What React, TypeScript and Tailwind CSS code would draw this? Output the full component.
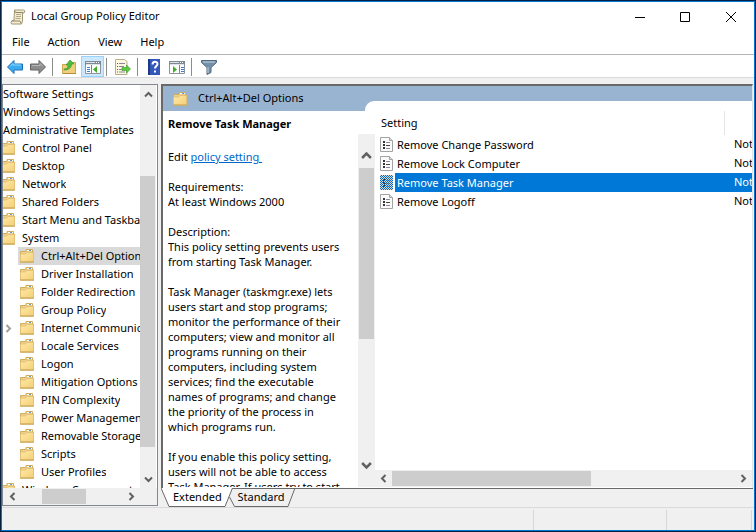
import React from "react";

type IconProps = { className?: string }

const treeRoots = ["Software Settings", "Windows Settings", "Administrative Templates"]
const treeFolders = ["Control Panel", "Desktop", "Network", "Shared Folders", "Start Menu and Taskbar", "System"]
const systemFolders = [
    "Ctrl+Alt+Del Options",
    "Driver Installation",
    "Folder Redirection",
    "Group Policy",
    "Internet Communication",
    "Locale Services",
    "Logon",
    "Mitigation Options",
    "PIN Complexity",
    "Power Management",
    "Removable Storage",
    "Scripts",
    "User Profiles",
]
const settings = ["Remove Change Password", "Remove Lock Computer", "Remove Task Manager", "Remove Logoff"]

const FolderIcon = ({ className = "" }: IconProps) => (
    <svg className={`w-4 h-4 shrink-0 ${className}`} viewBox="0 0 16 16">
        <defs>
            <linearGradient id="folder" x1="0" y1="0" x2="1" y2="1">
                <stop offset="0" stopColor="#ffe9a6" />
                <stop offset="1" stopColor="#f3cf78" />
            </linearGradient>
        </defs>
        <path d="M1.500 14V3.500h5.500V1.500h6.500V4h1v10z" fill="#efd08a" stroke="#cfae62" />
        <path d="M8 2.500h5" stroke="#fff" />
        <path d="M10 2.500h2" stroke="#5b9bd5" />
        <path d="M1.500 6h5l1.500-1.500h6.500v9.500h-13z" fill="url(#folder)" stroke="#e3c176" />
        <path d="M1 14h14" stroke="#c9a556" />
    </svg>
)

const PolicyIcon = () => (
    <svg className="w-4 h-4 shrink-0" viewBox="0 0 16 16">
        <path d="M1.500.5h9l3 3v11h-12z" fill="#fbfbfb" stroke="#a3a3a3" />
        <path d="M10.500.5v3h3" fill="#ddd" stroke="#a3a3a3" />
        <path d="M4 4h2v2H4zM4 7h2v2H4zM4 10h2v2H4z" fill="#333" />
        <path d="M7 5.500h4M7 11.500h4" stroke="#8e88a8" />
        <path d="M7 8.500h4" stroke="#444" />
    </svg>
)

const SelectedPolicyIcon = () => (
    <svg className="w-4 h-4 shrink-0" viewBox="0 0 16 16">
        <defs>
            <pattern id="dither" width="2" height="2" patternUnits="userSpaceOnUse">
                <path d="M0 0h1v1H0zM1 1h1v1H1z" fill="#0b68ba" />
            </pattern>
        </defs>
        <path d="M1 0h13v15H1z" fill="#d5dde4" />
        <path d="M4 4h2v2H4zM4 7h2v2H4zM4 10h2v2H4z" fill="#333" />
        <path d="M7 5.500h4M7 8.500h4M7 11.500h4" stroke="#999" />
        <path d="M1 0h13v15H1z" fill="url(#dither)" shapeRendering="crispEdges" />
    </svg>
)

const ScrollIcon = () => (
    <svg className="w-4 h-4" viewBox="0 0 16 16">
        <path d="M4.500 1h9l1.500 1-1 2h-1.500v8l-1 3h-10L1 13.500l1-2h2z" fill="#f3ecd0" stroke="#a09874" />
        <path d="M4.500 1.500L5.500 3.500H13M2 12h8l1 2.500" fill="none" stroke="#8f8868" />
        <path d="M6 5.500h5M6 7.500h5M5.500 9.500h5" stroke="#b0a98b" />
    </svg>
)

const ArrowIcon = ({ back }: { back?: boolean }) => (
    <svg className="w-4 h-4" viewBox="0 0 16 16">
        {back
            ? <path d="M.5 8l6.500-6.500V5h8.500v6H7v3.500z" fill="#3caaf0" stroke="#1d6fb5" />
            : <path d="M15.500 8L9 1.500V5H.5v6H9v3.500z" fill="#8d8d8d" stroke="#626262" />}
        {back ? <path d="M3 7.500L6 4.500V6h8" fill="none" stroke="#8edbff" /> : <path d="M2 6.500h8v-2l3 3" fill="none" stroke="#b8b8b8" />}
    </svg>
)

const UpIcon = () => (
    <svg className="w-4 h-4" viewBox="0 0 16 16">
        <path d="M1.500 5.500h6l1-2h6v11h-13z" fill="#efcf7b" stroke="#cda64e" />
        <path d="M2 14.500h13" stroke="#b58c3a" />
        <path d="M3 10c3 0 4-1 4-4H5l4-5 4 4h-2.500c0 4-3 6-7.500 6z" fill="#4dbd3e" stroke="#2e9130" strokeWidth=".6" />
    </svg>
)

const PaneIcon = ({ flip }: { flip?: boolean }) => (
    <svg className="w-4 h-4" viewBox="0 0 16 16">
        <path d="M.5 2.500h15v12H.5z" fill="#fff" stroke="#8d949e" />
        <path d="M0 2h16v4H0z" fill="#7f8995" />
        <path d="M1 3.500h9M1 5.500h14" stroke="#dde3ea" />
        <path d="M11 3.500h1M13 3.500h1" stroke="#fff" />
        {flip ? (
            <>
                <path d="M10.500 6v8" stroke="#7d8590" />
                <path d="M12 8.500h3M12 10.500h3M12 12.500h3" stroke="#3c7fc8" />
                <path d="M4 7l4 3.500L4 14z" fill="#3fae2a" />
            </>
        ) : (
            <>
                <path d="M6.500 6v8" stroke="#7d8590" />
                <path d="M2 8.500h3M2 10.500h3M2 12.500h3" stroke="#3c7fc8" />
                <path d="M12 7l-4 3.500 4 3.500z" fill="#3fae2a" />
            </>
        )}
    </svg>
)

const ExportIcon = () => (
    <svg className="w-4 h-4" viewBox="0 0 16 16">
        <path d="M.5.5h9l2.500 2v13H.5z" fill="#fdf8df" stroke="#b5ad8c" />
        <path d="M2 4.500h1M2 7.500h1M2 10.500h1M2 13h1" stroke="#555" />
        <path d="M4 4.500h6M4 7.500h5M4 10.500h3M4 13h6" stroke="#8a86a0" />
        <path d="M7 8.500h4.500V6l4 4-4 4v-2.500H7z" fill="#5dcb3d" stroke="#38982a" strokeWidth=".6" />
    </svg>
)

const HelpIcon = () => (
    <svg className="w-4 h-4" viewBox="0 0 16 16">
        <path d="M2 0h12v16H2z" fill="#3358ba" />
        <path d="M2 0h2v16H2z" fill="#1e3a86" />
        <path d="M6.500 5.500c0-3.500 5-3.500 5-.5 0 2-2.500 2-2.500 4.500" fill="none" stroke="#fff" strokeWidth="2" />
        <path d="M8 11.500h2v2H8z" fill="#fff" />
    </svg>
)

const FilterIcon = () => (
    <svg className="w-4 h-4" viewBox="0 0 16 16">
        <path d="M.5 1.500h15v2l-5.500 5v5l-4 2v-7l-5.500-5z" fill="#7390a9" stroke="#53687c" />
        <path d="M2 3h12M7 8v6" stroke="#c2d4e2" />
    </svg>
)

const Chevron = ({ className = "" }: IconProps) => (
    <svg className={`w-[9px] h-[9px] shrink-0 ${className}`} viewBox="0 0 9 9">
        <path d="M1 6.500l3.500-3.500 3.500 3.500" fill="none" stroke="#606060" strokeWidth="2" />
    </svg>
)

const Divider = () => <span className="w-px h-[18px] bg-[#8c8c8c]" />

function TreePane() {
    return (
        <div className="w-[156px] shrink-0 mb-px flex flex-col border border-[#828790] bg-white">
            <div className="flex-1 min-h-0 flex">
                <ul className="flex-1 min-w-0 overflow-hidden whitespace-nowrap">
                    {treeRoots.map((name) => (
                        <li key={name} className="h-[18px] leading-[18px]">{name}</li>
                    ))}
                    {treeFolders.map((name) => (
                        <li key={name} className="h-[18px] flex items-center gap-[6px]">
                            <FolderIcon className="-ml-[3px]" />
                            <span className="min-w-0 overflow-hidden">{name}</span>
                        </li>
                    ))}
                    {systemFolders.map((name) => (
                        <li key={name} className="h-[18px] flex items-center">
                            <span className="w-[15px] shrink-0 flex items-center pl-px">
                                {name.startsWith("Internet") && <Chevron className="rotate-90 opacity-60" />}
                            </span>
                            <span className={`flex-1 min-w-0 h-full flex items-center gap-[6px] pl-px ${name.startsWith("Ctrl") ? "bg-[#d9d9d9]" : ""}`}>
                                <FolderIcon />
                                <span className="min-w-0 overflow-hidden">{name}</span>
                            </span>
                        </li>
                    ))}
                    <li className="h-[18px] flex items-center gap-[6px]">
                        <FolderIcon className="-ml-[3px]" />
                        <span className="min-w-0 overflow-hidden">Windows Components</span>
                    </li>
                </ul>
                <div className="w-[16px] shrink-0 mr-px bg-[#f0f0f0] flex flex-col items-center">
                    <div className="h-[18px] flex items-center"><Chevron /></div>
                    <div className="flex-1 w-full flex flex-col">
                        <div className="grow-[73]" />
                        <div className="grow-[270] w-[15px] bg-[#cdcdcd]" />
                        <div className="grow-[24]" />
                    </div>
                    <div className="h-[17px] flex items-center"><Chevron className="rotate-180" /></div>
                </div>
            </div>
            <div className="h-[17px] shrink-0 flex items-center bg-[#f0f0f0] pl-[5px]">
                <Chevron className="-rotate-90" />
                <div className="w-[44px] h-[15px] ml-[25px] bg-[#cdcdcd]" />
                <Chevron className="rotate-90 ml-[41px]" />
            </div>
        </div>
    )
}

function Description() {
    return (
        <div className="w-[212px] shrink-0 min-h-0 flex flex-col leading-[15px]">
            <h2 className="font-bold px-[5px] pt-[5px] pb-[3px]">Remove Task Manager</h2>
            <div className="flex-1 min-h-0 flex">
                <div className="flex-1 overflow-hidden pl-[5px] pt-[15px] flex flex-col gap-[15px]">
                    <p>Edit <a href="#" className="text-[#0066cc] underline">policy setting&nbsp;</a></p>
                    <p>Requirements:<br />At least Windows 2000</p>
                    <p>Description:<br />This policy setting prevents users<br />from starting Task Manager.</p>
                    <p>
                        Task Manager (taskmgr.exe) lets<br />users start and stop programs;<br />
                        monitor the performance of their<br />computers; view and monitor all<br />
                        programs running on their<br />computers, including system<br />
                        services; find the executable<br />names of programs; and change<br />
                        the priority of the process in<br />which programs run.
                    </p>
                    <p>
                        If you enable this policy setting,<br />users will not be able to access<br />
                        Task Manager. If users try to start
                    </p>
                </div>
                <div className="w-[17px] shrink-0 bg-[#f0f0f0] flex flex-col items-center">
                    <div className="h-[34px] flex items-center pt-[8px]"><Chevron className="scale-125" /></div>
                    <div className="flex-1 w-[15px] flex flex-col">
                        <div className="grow-[170] bg-[#cdcdcd]" />
                        <div className="grow-[104]" />
                    </div>
                    <div className="h-[44px] flex items-center"><Chevron className="rotate-180 scale-125" /></div>
                </div>
            </div>
        </div>
    )
}

function SettingsList() {
    return (
        <div className="flex-1 min-w-0 flex flex-col">
            <table className="w-full table-fixed">
                <thead>
                    <tr className="h-[24px]">
                        <th className="p-0 font-normal text-left pl-[6px]">Setting</th>
                        <th className="p-0 w-[28px] border-l border-[#e5e5e5]" />
                    </tr>
                </thead>
                <tbody>
                    {settings.map((name) => {
                        const selected = name === "Remove Task Manager"
                        return (
                            <tr key={name} className="h-[19px]">
                                <td className="p-0">
                                    <div className="flex items-center pl-[4px] h-[19px]">
                                        {selected ? <SelectedPolicyIcon /> : <PolicyIcon />}
                                        <span className={`flex-1 h-full leading-[19px] pl-[2px] ${selected ? "bg-[#0078d7] text-white" : ""}`}>{name}</span>
                                    </div>
                                </td>
                                <td className={`p-0 pl-[10px] overflow-hidden whitespace-nowrap ${selected ? "bg-[#0078d7] text-white" : ""}`}>Not configured</td>
                            </tr>
                        )
                    })}
                </tbody>
            </table>
            <div className="mt-auto h-[17px] flex items-center bg-[#f0f0f0] px-[4px]">
                <Chevron className="-rotate-90" />
                <div className="flex-1 h-[15px] flex ml-[4px]">
                    <div className="grow-[199] bg-[#cdcdcd]" />
                    <div className="grow-[148]" />
                </div>
                <Chevron className="rotate-90" />
            </div>
        </div>
    )
}

function ViewTabs() {
    return (
        <div className="h-[19px] shrink-0 border-t border-[#696969]">
            <div role="tablist" className="relative w-[136px] h-[19px] -mt-px flex items-center">
                <svg className="absolute inset-0" width="136" height="19" viewBox="0 0 136 19">
                    <path d="M68.500 9l5 9.500H127L134 0" fill="none" stroke="#696969" />
                    <path d="M0 0l8 18.500h56L71.500 0z" fill="#fff" />
                    <path d="M0 0l8 18.500h56L71.500 0" fill="none" stroke="#696969" />
                </svg>
                <button role="tab" aria-selected="true" className="relative ml-[12px] w-[48px]">Extended</button>
                <button role="tab" aria-selected="false" className="relative ml-[16px] w-[48px]">Standard</button>
            </div>
        </div>
    )
}

export default function App() {
    return (
        <div className="h-screen flex flex-col bg-[#f0f0f0] border border-[#06203f] text-black text-[11px] font-['Noto_Sans','Open_Sans',sans-serif] overflow-hidden">
            <div className="flex-1 min-h-0 flex flex-col border border-[#0078d7]">
                <header className="bg-white border-b border-[#dadada]">
                    <div className="h-[29px] flex items-center pl-[8px] gap-[5px]">
                        <ScrollIcon />
                        <h1 className="flex-1">Local Group Policy Editor</h1>
                        <div className="h-full flex">
                            <button aria-label="Minimize" className="w-[44px] h-full flex items-center justify-center">
                                <svg className="w-[10px] h-[10px]" viewBox="0 0 10 10"><path d="M0 5.500h10" stroke="#000" /></svg>
                            </button>
                            <button aria-label="Maximize" className="w-[46px] h-full flex items-center justify-center">
                                <svg className="w-[10px] h-[10px]" viewBox="0 0 10 10"><path d="M.5.5h9v9h-9z" fill="none" stroke="#000" /></svg>
                            </button>
                            <button aria-label="Close" className="w-[46px] h-full flex items-center justify-center">
                                <svg className="w-[10px] h-[10px]" viewBox="0 0 10 10"><path d="M0 0l10 10M10 0L0 10" stroke="#000" /></svg>
                            </button>
                        </div>
                    </div>
                    <nav className="h-[24px] flex items-center pl-[10px] gap-[18px] border-b border-[#b5b5b5]">
                        <button>File</button>
                        <button>Action</button>
                        <button>View</button>
                        <button>Help</button>
                    </nav>
                    <div className="h-[22px] flex items-center pl-[5px] pt-px">
                        <button aria-label="Back"><ArrowIcon back /></button>
                        <button aria-label="Forward" className="ml-[7px] mr-[6px]"><ArrowIcon /></button>
                        <Divider />
                        <button aria-label="Up one level" className="ml-[8px] mr-[4px]"><UpIcon /></button>
                        <button aria-label="Show console tree" className="w-[23px] h-[21px] mr-[2px] flex items-center justify-center bg-[#cce8ff] border border-[#99d1ff]"><PaneIcon /></button>
                        <Divider />
                        <button aria-label="Export list" className="ml-[8px] mr-[6px]"><ExportIcon /></button>
                        <Divider />
                        <button aria-label="Help topics" className="ml-[8px] mr-[7px]"><HelpIcon /></button>
                        <button aria-label="Show action pane" className="mr-[6px]"><PaneIcon flip /></button>
                        <Divider />
                        <button aria-label="Filter" className="ml-[9px]"><FilterIcon /></button>
                    </div>
                </header>

                <div className="flex-1 min-h-0 flex gap-[3px] pt-[6px] pr-px">
                    <TreePane />
                    <main className="flex-1 min-w-0 flex flex-col">
                        <div className="flex-1 min-h-0 flex flex-col bg-white border-t-2 border-l-2 border-[#696969] border-r border-r-[#e3e3e3] pb-px">
                            <div className="h-[25px] shrink-0 flex bg-[#99b4d1]">
                                <div className="w-[202px] flex items-center pl-[9px] gap-[10px]"><FolderIcon />Ctrl+Alt+Del Options</div>
                                <div className="flex-1 mt-[15px] rounded-tl-[9px] bg-white" />
                            </div>
                            <div className="flex-1 min-h-0 flex">
                                <Description />
                                <SettingsList />
                            </div>
                        </div>
                        <ViewTabs />
                    </main>
                </div>
                <footer className="h-[23px] shrink-0 flex justify-end border-t border-[#dadada] pt-[2px]">
                    <span className="w-[133px] border-l border-[#d7d7d7]" />
                    <span className="w-[86px] border-x border-[#d7d7d7] mr-[2px]" />
                </footer>
            </div>
        </div>
    )
}
